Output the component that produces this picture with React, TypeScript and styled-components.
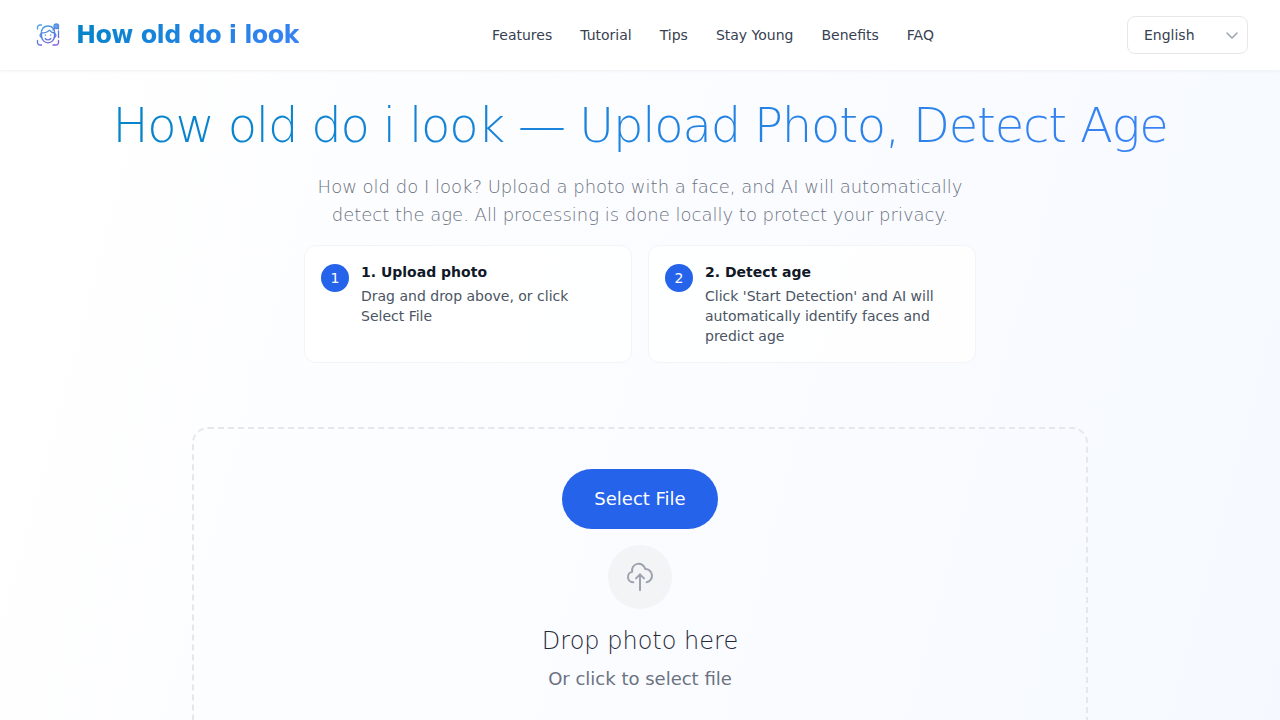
import React from "react";
import styled, { createGlobalStyle } from "styled-components";

const GlobalStyle = createGlobalStyle`
  *, *::before, *::after { box-sizing: border-box; }
  body { margin: 0; font-family: "DejaVu Sans", "Noto Sans", sans-serif; color: #111827; }
  h1, h2, h3, p { margin: 0; }
  button, select { font-family: inherit; }
`;

const Page = styled.div`
  min-height: 100vh;
  background: linear-gradient(105deg, #ffffff 0%, #fbfcff 50%, #f5f9ff 100%);
`;

const Header = styled.header`
  display: flex;
  justify-content: space-between;
  align-items: center;
  padding: 16px 32px;
  background: #ffffff;
  border-bottom: 1px solid #f3f4f6;
  box-shadow: 0 1px 2px rgba(0, 0, 0, 0.03);
`;

const Brand = styled.a`
  display: flex;
  align-items: center;
  gap: 12px;
  text-decoration: none;
`;

const LogoIcon = styled.svg`
  width: 32px;
  height: 32px;
  flex: none;
`;

const BrandName = styled.span`
  font-size: 24px;
  line-height: 32px;
  font-weight: 700;
  letter-spacing: -0.025em;
  color: transparent;
  background: linear-gradient(135deg, #0284c7, #3b82f6);
  background-clip: text;
`;

const Nav = styled.nav`
  display: flex;
  gap: 28px;
`;

const NavLink = styled.a`
  font-size: 14px;
  line-height: 20px;
  color: #374151;
  text-decoration: none;
`;

const LanguageField = styled.div`
  display: grid;
  align-items: center;
  width: 121px;

  > * { grid-area: 1 / 1; }
`;

const LanguageSelect = styled.select`
  appearance: none;
  width: 100%;
  height: 38px;
  padding: 0 32px 0 16px;
  font-size: 14px;
  line-height: 20px;
  color: #374151;
  background: #ffffff;
  border: 1px solid #e5e7eb;
  border-radius: 8px;
`;

const Chevron = styled.svg`
  justify-self: end;
  width: 16px;
  height: 16px;
  margin-right: 8px;
  pointer-events: none;
`;

const Main = styled.main`
  padding: 22px 32px 64px;
`;

const Hero = styled.section`
  display: flex;
  flex-direction: column;
  align-items: center;
  gap: 16px;
  text-align: center;
`;

const Title = styled.h1`
  font-size: 48px;
  line-height: 64px;
  font-weight: 200;
  letter-spacing: -0.025em;
  color: transparent;
  background: linear-gradient(135deg, #0284c7, #3b82f6);
  background-clip: text;
`;

const Subtitle = styled.p`
  max-width: 672px;
  font-size: 18px;
  line-height: 28px;
  font-weight: 200;
  color: #6b7280;
`;

const Steps = styled.div`
  display: grid;
  grid-template-columns: 1fr 1fr;
  gap: 16px;
  width: 100%;
  max-width: 672px;
  text-align: left;
`;

const StepCard = styled.div`
  display: flex;
  align-items: flex-start;
  gap: 12px;
  padding: 16px;
  background: rgba(255, 255, 255, 0.8);
  border: 1px solid #f3f4f6;
  border-radius: 12px;
`;

const StepNumber = styled.span`
  flex: none;
  width: 28px;
  height: 28px;
  margin-top: 2px;
  border-radius: 50%;
  background: #2563eb;
  color: #ffffff;
  font-size: 14px;
  line-height: 28px;
  text-align: center;
`;

const StepTitle = styled.h3`
  margin-bottom: 4px;
  font-size: 14px;
  line-height: 20px;
  font-weight: 700;
  color: #111827;
`;

const StepText = styled.p`
  font-size: 14px;
  line-height: 20px;
  color: #4b5563;
`;

const DropZone = styled.section`
  display: flex;
  flex-direction: column;
  align-items: center;
  max-width: 896px;
  margin: 64px auto 0;
  padding: 40px;
  border: 2px dashed #e5e7eb;
  border-radius: 16px;
`;

const SelectButton = styled.button`
  padding: 16px 32px;
  border: 0;
  border-radius: 30px;
  background: #2563eb;
  color: #ffffff;
  font-size: 18px;
  line-height: 28px;
`;

const UploadBadge = styled.div`
  display: grid;
  place-items: center;
  width: 64px;
  height: 64px;
  margin: 16px 0;
  border-radius: 50%;
  background: #f3f4f6;
`;

const DropTitle = styled.h2`
  margin-bottom: 8px;
  font-size: 24px;
  line-height: 32px;
  font-weight: 200;
  color: #1f2937;
`;

const DropText = styled.p`
  font-size: 18px;
  line-height: 28px;
  color: #6b7280;
`;

const links = [
  { label: "Features", href: "#features" },
  { label: "Tutorial", href: "#tutorial" },
  { label: "Tips", href: "#tips" },
  { label: "Stay Young", href: "#stay-young" },
  { label: "Benefits", href: "#benefits" },
  { label: "FAQ", href: "#faq" },
];

const steps = [
  { title: "1. Upload photo", text: "Drag and drop above, or click Select File" },
  {
    title: "2. Detect age",
    text: "Click 'Start Detection' and AI will automatically identify faces and predict age",
  },
];

function FaceScanLogo() {
  return (
    <LogoIcon viewBox="0 0 32 32" fill="none" aria-hidden="true">
      <defs>
        <linearGradient id="logoStroke" x1="10" y1="4" x2="20" y2="28" gradientUnits="userSpaceOnUse">
          <stop offset="0" stopColor="#45a8e8" />
          <stop offset="0.6" stopColor="#5579dc" />
          <stop offset="1" stopColor="#8a5be0" />
        </linearGradient>
      </defs>
      <g stroke="url(#logoStroke)" strokeWidth="1.3" strokeLinecap="round" strokeLinejoin="round">
        <path d="M5.500 10V8.500a2.500 2.500 0 0 1 2.500-2.500h1.500" />
        <path d="M5.500 21.500v2a2.500 2.500 0 0 0 2.500 2.500h1.500" />
        <path d="M26.500 21.500v2a2.500 2.500 0 0 1-2.500 2.500h-3" />
        <path d="M26.500 12v6.500" />
        <path d="M9.200 14.500C9.500 9.500 12.500 7 16 7s6.500 2.500 6.800 7.500" />
        <path d="M9.500 14v3c0 4 3 6.800 6.500 6.800s6.500-2.800 6.500-6.800v-3c-2.500-.3-4-1.300-5-2.800-1.500 1.800-4 2.800-8 2.800Z" />
        <path d="M9.300 15c-1.600-.3-1.800 3 .4 3.200M22.700 15c1.600-.3 1.800 3-.4 3.200" />
        <path d="M13.200 19.500c1.500 1.900 4.100 1.900 5.600 0" />
        <path d="M13.300 16v.2M18.700 16v.2" />
        <circle cx="24.300" cy="7.300" r="2.300" fill="#6f9fe6" />
        <path d="M22.500 9.500l-1.500 1.500M26.400 9v1" />
      </g>
    </LogoIcon>
  );
}

export default function App() {
  return (
    <>
      <GlobalStyle />
      <Page>
        <Header>
          <Brand href="#top">
            <FaceScanLogo />
            <BrandName>How old do i look</BrandName>
          </Brand>
          <Nav aria-label="Main">
            {links.map((link) => (
              <NavLink key={link.href} href={link.href}>
                {link.label}
              </NavLink>
            ))}
          </Nav>
          <LanguageField>
            <LanguageSelect aria-label="Language" defaultValue="en">
              <option value="en">English</option>
            </LanguageSelect>
            <Chevron viewBox="0 0 16 16" fill="none" aria-hidden="true">
              <path d="m3 6 5 5 5-5" stroke="#9ca3af" strokeWidth="1.500" strokeLinecap="round" strokeLinejoin="round" />
            </Chevron>
          </LanguageField>
        </Header>
        <Main id="top">
          <Hero>
            <Title>How old do i look — Upload Photo, Detect Age</Title>
            <Subtitle>
              How old do I look? Upload a photo with a face, and AI will automatically detect the age. All processing
              is done locally to protect your privacy.
            </Subtitle>
            <Steps>
              {steps.map((step, index) => (
                <StepCard key={step.title}>
                  <StepNumber>{index + 1}</StepNumber>
                  <div>
                    <StepTitle>{step.title}</StepTitle>
                    <StepText>{step.text}</StepText>
                  </div>
                </StepCard>
              ))}
            </Steps>
          </Hero>
          <DropZone>
            <SelectButton type="button">Select File</SelectButton>
            <UploadBadge>
              <svg width="32" height="32" viewBox="0 0 24 24" fill="none" aria-hidden="true">
                <path
                  d="M7 16a4 4 0 0 1-.88-7.903A5 5 0 1 1 15.900 6L16 6a5 5 0 0 1 1 9.900M15 13l-3-3m0 0l-3 3m3-3v12"
                  stroke="#9ca3af"
                  strokeWidth="1.500"
                  strokeLinecap="round"
                  strokeLinejoin="round"
                />
              </svg>
            </UploadBadge>
            <DropTitle>Drop photo here</DropTitle>
            <DropText>Or click to select file</DropText>
          </DropZone>
        </Main>
      </Page>
    </>
  );
}
